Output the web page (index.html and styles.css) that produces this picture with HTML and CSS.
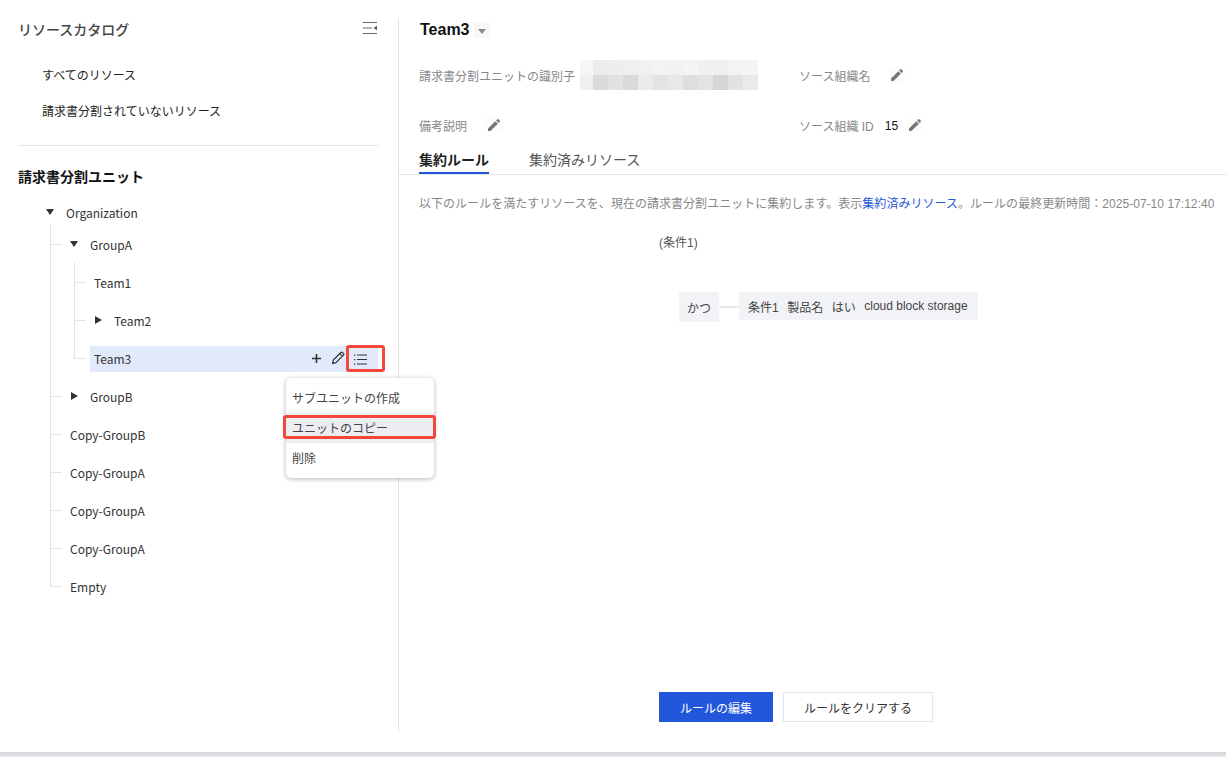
FILE: index.html
```html
<!DOCTYPE html>
<html lang="ja">
<head>
<meta charset="utf-8">
<title>リソースカタログ</title>
<link rel="stylesheet" href="styles.css">
</head>
<body>
<div class="app">
  <aside class="side">
    <div class="side-head">
      <span class="side-title">リソースカタログ</span>
      <svg class="collapse" width="14" height="12" viewBox="0 0 14 12"><path d="M0 .5h14M0 6h9M0 11.5h14" stroke="#666" fill="none"/><path d="M14 3.5v5L10.5 6z" fill="#666"/></svg>
    </div>
    <div class="catalog">
      <div class="catalog-item">すべてのリソース</div>
      <div class="catalog-item">請求書分割されていないリソース</div>
    </div>
    <div class="unit-title">請求書分割ユニット</div>
    <div class="tree">
      <div class="row root"><i class="arrow down"></i><span>Organization</span></div>
      <ul class="level top">
        <li>
          <div class="row"><i class="arrow down"></i><span>GroupA</span></div>
          <ul class="level sub">
            <li><div class="row leaf"><span>Team1</span></div></li>
            <li><div class="row"><i class="arrow right"></i><span>Team2</span></div></li>
            <li>
              <div class="row leaf selected">
                <span>Team3</span>
                <span class="actions">
                  <svg class="act-plus" width="9" height="9" viewBox="0 0 9 9"><path d="M4.5 0v9M0 4.5h9" stroke="#333" stroke-width="1.6"/></svg>
                  <svg class="act-pen" width="14" height="14" viewBox="0 0 14 14"><path d="M1.6 12.4l.7-3.3L9.9 1.5a1 1 0 0 1 1.4 0l1.2 1.2a1 1 0 0 1 0 1.4L4.9 11.7zM8.8 2.6l2.6 2.6" fill="none" stroke="#333" stroke-width="1.2"/></svg>
                  <span class="act-list">
                    <svg width="13" height="11" viewBox="0 0 13 11"><path d="M3 1h10M3 5.5h10M3 10h10" stroke="#333" stroke-width="1.1"/><path d="M0 .4h1.3v1.3H0zM0 4.9h1.3v1.3H0zM0 9.4h1.3v1.3H0z" fill="#333"/></svg>
                  </span>
                </span>
              </div>
              <div class="menu">
                <div class="menu-item">サブユニットの作成</div>
                <div class="menu-item hover">ユニットのコピー</div>
                <div class="menu-item">削除</div>
              </div>
            </li>
          </ul>
        </li>
        <li><div class="row"><i class="arrow right"></i><span>GroupB</span></div></li>
        <li><div class="row leaf"><span>Copy-GroupB</span></div></li>
        <li><div class="row leaf"><span>Copy-GroupA</span></div></li>
        <li><div class="row leaf"><span>Copy-GroupA</span></div></li>
        <li><div class="row leaf"><span>Copy-GroupA</span></div></li>
        <li><div class="row leaf"><span>Empty</span></div></li>
      </ul>
    </div>
  </aside>
  <main class="main">
    <header class="head">
      <h1 class="name">Team3</h1>
      <span class="drop"><i></i></span>
    </header>
    <div class="fields">
      <div class="field first">
        <span class="label">請求書分割ユニットの識別子</span>
        <svg class="mosaic" width="178" height="30" viewBox="0 0 178 30" shape-rendering="crispEdges">
          <rect x="0" y="0" width="13" height="15" fill="#f6f6f6"/><rect x="13" y="0" width="15" height="15" fill="#ececed"/><rect x="28" y="0" width="15" height="15" fill="#eeeeee"/><rect x="43" y="0" width="15" height="15" fill="#efefef"/><rect x="58" y="0" width="15" height="15" fill="#f1f1f0"/><rect x="73" y="0" width="15" height="15" fill="#f3f3f3"/><rect x="88" y="0" width="15" height="15" fill="#f2f2f2"/><rect x="103" y="0" width="15" height="15" fill="#f4f4f4"/><rect x="118" y="0" width="15" height="15" fill="#f0f0f0"/><rect x="133" y="0" width="15" height="15" fill="#efefef"/><rect x="148" y="0" width="15" height="15" fill="#f4f4f4"/><rect x="163" y="0" width="15" height="15" fill="#f5f5f5"/>
          <rect x="0" y="15" width="13" height="15" fill="#f1f0ef"/><rect x="13" y="15" width="15" height="15" fill="#dadbdd"/><rect x="28" y="15" width="15" height="15" fill="#e2e2e2"/><rect x="43" y="15" width="15" height="15" fill="#dadada"/><rect x="58" y="15" width="15" height="15" fill="#ebebe9"/><rect x="73" y="15" width="15" height="15" fill="#e2e3e3"/><rect x="88" y="15" width="15" height="15" fill="#e8e8e8"/><rect x="103" y="15" width="15" height="15" fill="#dededd"/><rect x="118" y="15" width="15" height="15" fill="#e3e3e3"/><rect x="133" y="15" width="15" height="15" fill="#d7d6d4"/><rect x="148" y="15" width="15" height="15" fill="#e2e2e1"/><rect x="163" y="15" width="15" height="15" fill="#e9eaec"/>
        </svg>
      </div>
      <div class="field">
        <span class="label">ソース組織名</span>
        <span class="pen pen-name"><svg width="16" height="16" viewBox="0 0 24 24"><path d="M3 17.25V21h3.75L17.81 9.94l-3.75-3.75zM20.71 7.04a1 1 0 0 0 0-1.41l-2.34-2.34a1 1 0 0 0-1.41 0l-1.83 1.83 3.75 3.75z" fill="#777"/></svg></span>
      </div>
      <div class="field first">
        <span class="label">備考説明</span>
        <span class="pen pen-note"><svg width="16" height="16" viewBox="0 0 24 24"><path d="M3 17.25V21h3.75L17.81 9.94l-3.75-3.75zM20.71 7.04a1 1 0 0 0 0-1.41l-2.34-2.34a1 1 0 0 0-1.41 0l-1.83 1.83 3.75 3.75z" fill="#777"/></svg></span>
      </div>
      <div class="field">
        <span class="label">ソース組織 ID</span>
        <span class="value">15</span>
        <span class="pen pen-id"><svg width="16" height="16" viewBox="0 0 24 24"><path d="M3 17.25V21h3.75L17.81 9.94l-3.75-3.75zM20.71 7.04a1 1 0 0 0 0-1.41l-2.34-2.34a1 1 0 0 0-1.41 0l-1.83 1.83 3.75 3.75z" fill="#777"/></svg></span>
      </div>
    </div>
    <nav class="tabs">
      <span class="tab active">集約ルール</span>
      <span class="tab">集約済みリソース</span>
    </nav>
    <p class="desc">以下のルールを満たすリソースを、現在の請求書分割ユニットに集約します。表示<a class="link">集約済みリソース</a>。ルールの最終更新時間：2025-07-10 17:12:40</p>
    <div class="rule">
      <div class="expr">(条件1)</div>
      <div class="rule-row">
        <span class="and">かつ</span>
        <span class="conn"></span>
        <span class="cond"><span>条件1</span><span>製品名</span><span>はい</span><span>cloud block storage</span></span>
      </div>
    </div>
    <div class="buttons">
      <button class="btn primary">ルールの編集</button>
      <button class="btn">ルールをクリアする</button>
    </div>
  </main>
</div>
<div class="bottom"></div>
</body>
</html>
```
FILE: styles.css
```css
*, *::before, *::after { box-sizing: border-box; }
html, body { margin: 0; padding: 0; }
body {
  width: 1226px;
  height: 757px;
  overflow: hidden;
  background: #fff;
  font-family: "Liberation Sans", "Noto Sans CJK JP", sans-serif;
  font-size: 12px;
  display: flex;
  flex-direction: column;
}
.app { display: flex; height: 752px; align-items: flex-start; }

/* sidebar */
.side {
  width: 399px;
  height: 714px;
  margin-top: 18px;
  padding: 0 20px 0 18px;
  border-right: 1px solid #e4e4e4;
  font-family: "Noto Sans CJK JP", sans-serif;
  color: #222;
}
.side-head { display: flex; justify-content: space-between; align-items: flex-start; height: 24px; }
.side-title { font-size: 14px; line-height: 22px; font-weight: 500; color: #444; }
.collapse { margin-top: 4px; margin-right: 1px; }
.catalog { padding: 15px 0 16px 24px; border-bottom: 1px solid #e6e6e6; }
.catalog-item { height: 36px; line-height: 36px; color: #222; }
.unit-title { margin-top: 18px; font-size: 14px; font-weight: 700; line-height: 24px; color: #111; }
.tree { position: relative; margin-top: 12px; }
.row { display: flex; align-items: center; height: 26px; padding-bottom: 2px; color: #333; white-space: nowrap; }
.root { padding-left: 28px; }
.arrow { display: block; width: 0; height: 0; }
.arrow.down { width: 8px; border-left: 4px solid transparent; border-right: 4px solid transparent; border-top: 6px solid #333; margin-right: 12px; }
.arrow.right { width: 7px; height: 8px; border-top: 4px solid transparent; border-bottom: 4px solid transparent; border-left: 7px solid #333; }
.level { list-style: none; margin: 0; padding: 0; }
.level > li { position: relative; }
.level > li + li { margin-top: 12px; }
.top { padding: 6px 0 0 44px; }
.sub { padding: 12px 0 0 28px; }
.top > li::before, .sub > li::before {
  content: "";
  position: absolute;
  top: -12px;
  bottom: 0;
  width: 1px;
  background: #e4e4e4;
}
.top > li::after, .sub > li::after {
  content: "";
  position: absolute;
  top: 12px;
  width: 12px;
  height: 1px;
  background: #e4e4e4;
}
.top > li::before, .top > li::after { left: -12px; }
.sub > li::before, .sub > li::after { left: -16px; }
.level > li:first-child::before { top: -8px; }
.level > li:last-child::before { bottom: auto; height: 25px; }
.top > li > .row > .arrow.down { margin-left: 8px; }
.top > li > .row > .arrow.right { margin-left: 9px; margin-right: 12px; }
.top > li > .row.leaf { padding-left: 8px; }
.sub > li > .row.leaf { padding-left: 4px; }
.sub > li > .row > .arrow.right { margin-left: 5px; margin-right: 12px; }
.selected { position: relative; background: #e1e9fb; width: 288px; }
.actions { display: flex; align-items: center; margin-left: auto; padding-right: 33px; }
.act-plus { margin-right: 10px; }
.act-list {
  position: absolute;
  left: 256px;
  top: -1px;
  width: 39px;
  height: 27px;
  border: 3px solid #f2473c;
  border-radius: 3px;
  padding: 6px 0 0 5px;
  display: flex;
  align-items: flex-start;
}
.menu {
  position: absolute;
  left: 196px;
  top: 32px;
  width: 148px;
  height: 100px;
  padding: 5px 0 0;
  background: #fff;
  border-radius: 5px;
  box-shadow: 0 1px 5px rgba(0, 0, 0, .3);
  z-index: 2;
}
.menu-item { height: 30px; line-height: 30px; padding-left: 6px; color: #444; position: relative; }
.menu-item.hover { background: #ebedf1; }
.menu-item.hover::before {
  content: "";
  position: absolute;
  left: -3px;
  right: -2px;
  top: 2px;
  height: 24px;
  border: 3px solid #f2473c;
  border-radius: 3px;
}

/* main */
.main { flex: 1; height: 714px; margin-top: 18px; display: flex; flex-direction: column; min-width: 0; }
.head { display: flex; align-items: center; height: 24px; padding-left: 21px; flex: none; }
.name { margin: 0; font-size: 16px; font-weight: 700; color: #111; }
.drop { width: 16px; height: 16px; margin-left: 4px; background: #f7f7f7; display: flex; align-items: center; justify-content: center; }
.drop i { display: block; border-left: 4px solid transparent; border-right: 4px solid transparent; border-top: 5px solid #888; margin-top: 2px; }
.fields { display: grid; grid-template-columns: 380px 1fr; grid-auto-rows: 50px; padding: 8px 0 0 20px; height: 108px; flex: none; }
.field { display: flex; align-items: center; height: 50px; }
.label { color: #888; }
.mosaic { display: block; margin-left: 5px; }
.value { margin-left: 11px; padding-top: 2px; color: #111; }
.pen { display: flex; align-items: center; justify-content: center; width: 16px; height: 16px; background: #fcfcfc; }
.pen-name { margin-left: 19px; }
.pen-note { margin-left: 19px; }
.pen-id { margin-left: 9px; }
.tabs { display: flex; gap: 40px; height: 25px; padding-left: 20px; border-bottom: 1px solid #e6e6ee; flex: none; }
.tab { font-size: 14px; line-height: 20px; height: 24px; color: #555; }
.tab.active { color: #222; font-weight: 700; border-bottom: 2px solid #2257dc; }
.desc { margin: 21px 0 0 20px; line-height: 16px; color: #888; white-space: nowrap; letter-spacing: .03px; }
.link { color: #1f55d8; }
.rule { padding: 23px 0 0 260px; }
.expr { color: #555; line-height: 16px; }
.rule-row { display: flex; align-items: flex-start; margin: 41px 0 0 20px; }
.and { width: 40px; height: 30px; background: #f1f3f7; color: #444; display: flex; align-items: center; justify-content: center; }
.conn { width: 20px; height: 2px; margin-top: 14px; background: #e6e8ee; }
.cond { display: flex; gap: 8.5px; height: 28px; padding: 0 10px 0 9px; align-items: center; background: #f1f3f7; color: #444; }
.buttons { margin-top: auto; padding: 0 0 10px 260px; display: flex; gap: 10px; }
.btn { height: 30px; width: 150px; border: 1px solid #e3e6ee; background: #fff; color: #333; font: inherit; padding: 0; }
.btn.primary { width: 114px; background: #2257dc; border-color: #2257dc; color: #fff; }

.bottom { height: 5px; background: linear-gradient(#d4d4da, #e6e6ec); flex: none; }
```
